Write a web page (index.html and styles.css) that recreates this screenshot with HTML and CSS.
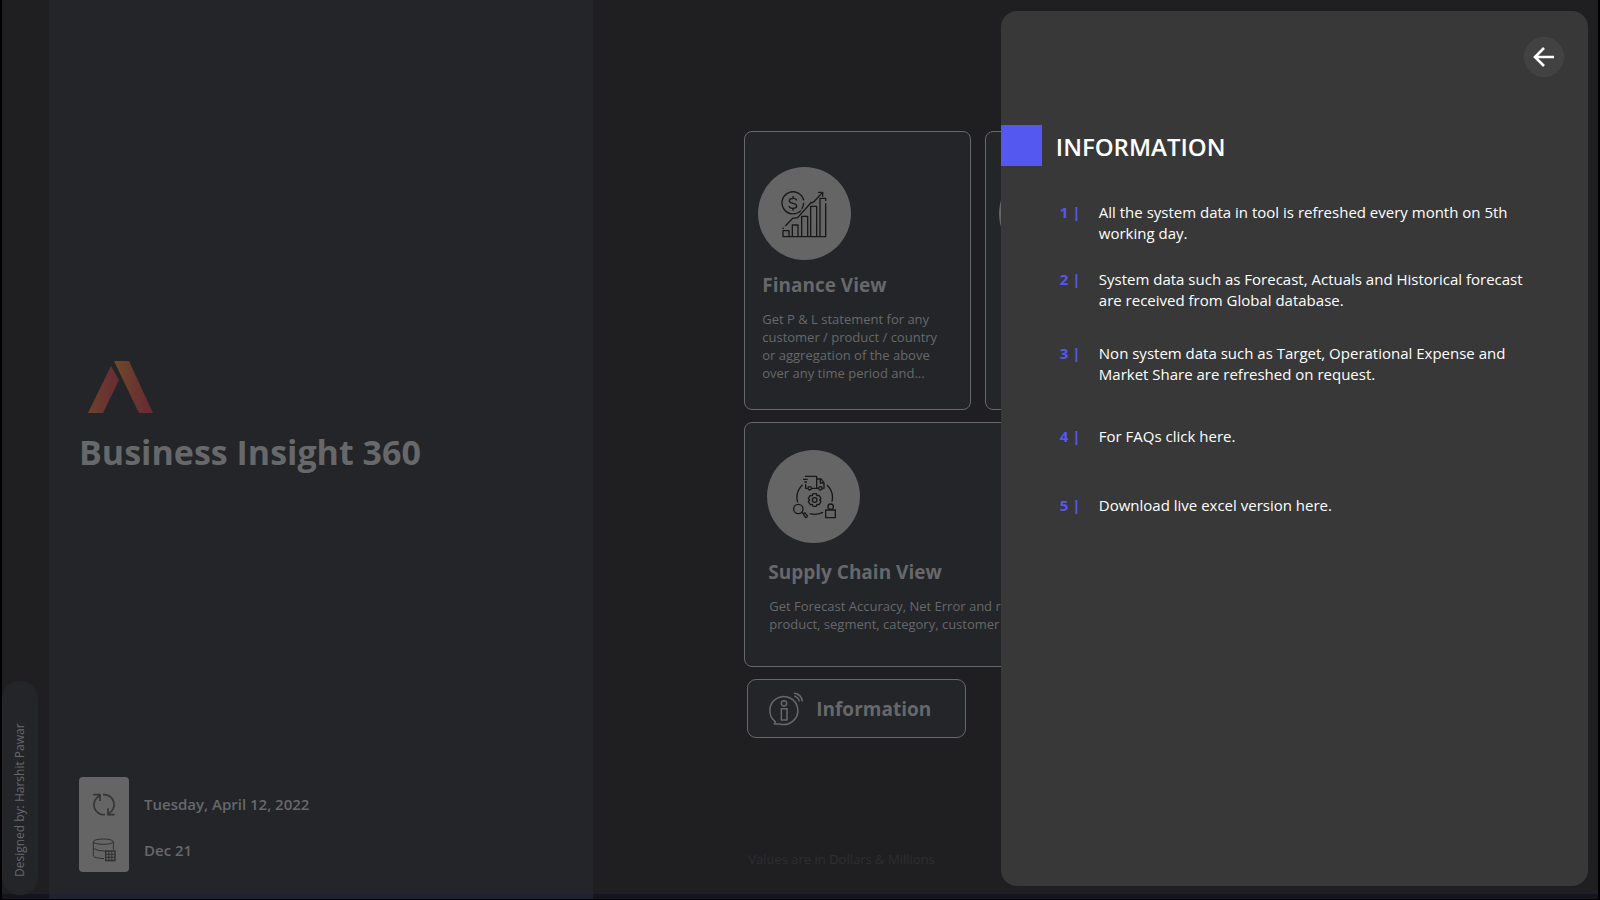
FILE: index.html
```html
<!DOCTYPE html>
<html lang="en">
<head>
<meta charset="utf-8">
<title>Business Insight 360</title>
<link rel="stylesheet" href="styles.css">
</head>
<body>
<div class="frame">
  <aside class="rail">
    <div class="credit"><span class="credit-text">Designed by: Harshit Pawar</span></div>
  </aside>

  <section class="intro">
    <svg class="logo" viewBox="0 0 66 53" aria-hidden="true">
      <defs>
        <linearGradient id="leg-left" x1="0" x2="1" y1="0" y2="0"><stop offset="0" stop-color="#6d422c"/><stop offset="1" stop-color="#672b33"/></linearGradient>
        <linearGradient id="leg-right" x1="0" x2="1" y1="0" y2="0"><stop offset="0" stop-color="#70482a"/><stop offset="1" stop-color="#652934"/></linearGradient>
      </defs>
      <path d="M0 52 L23 5 L31 19 L15 52 Z" fill="url(#leg-left)"/>
      <path d="M26 0 H41 L65 52 H51 Z" fill="url(#leg-right)"/>
    </svg>
    <h1 class="title">Business Insight 360</h1>
    <div class="meta">
      <div class="meta-icons">
        <svg class="meta-icon" viewBox="273 399 72 72" aria-hidden="true">
          <g fill="none" stroke="#353535" stroke-width="5">
            <path d="M306 404 A30 30 0 0 1 322 461 M341 464 H321 V445"/>
            <path d="M312 464 A30 30 0 0 1 296 407 M277 404 H297 V423"/>
          </g>
        </svg>
        <svg class="meta-icon" viewBox="274 532 72 72" aria-hidden="true">
          <g fill="none" stroke="#303030" stroke-width="3">
            <ellipse cx="308" cy="543" rx="30" ry="8"/>
            <path d="M278 543 V586 Q280 592 310 594 M338 543 V567 M278 563 Q290 572 313 571"/>
          </g>
          <path d="M313 569 H345 V602 H313 Z" fill="#303030"/>
          <path d="M317 573h6v6h-6z M326 573h6v6h-6z M335 573h6v6h-6z M317 582h6v6h-6z M326 582h6v6h-6z M335 582h6v6h-6z M317 591h6v6h-6z M326 591h6v6h-6z M335 591h6v6h-6z" fill="#656565"/>
        </svg>
      </div>
      <div class="meta-values">
        <span>Tuesday, April 12, 2022</span>
        <span>Dec 21</span>
      </div>
    </div>
  </section>

  <main class="canvas">
    <div class="cards">
      <article class="card">
        <div class="disc">
          <svg class="disc-icon" viewBox="137 207 144 144" aria-hidden="true">
            <g fill="none" stroke="#18181a" stroke-width="4" stroke-linejoin="round">
              <path d="M205 238 A33 33 0 1 0 197 268 M205 245 Q205 256 199 264"/>
              <path d="M184 238 Q183 232 173 232 Q162 232 162 239 Q162 245 173 247 Q184 249 184 256 Q184 262 173 262 Q162 262 161 255 M173 225 V232 M173 262 V269"/>
              <path d="M142 323 L145 320 M150 315 L172 292 L187 290 L226 246 L235 243 L261 215 M248 214 H262 V227"/>
              <path d="M141 347 H272 M143 347 V329 H161 V347 M171 347 V312 H188 V347 M199 347 V286 H217 V347 M226 347 V256 H244 V347 M254 347 V232 H271 V240 M271 247 V347"/>
            </g>
          </svg>
        </div>
        <h2 class="card-title">Finance View</h2>
        <p class="card-text">Get P &amp; L statement for any<br>customer / product / country<br>or aggregation of the above<br>over any time period and...</p>
      </article>
      <article class="card">
        <div class="disc"></div>
      </article>
      <article class="card card-wide">
        <div class="disc">
          <svg class="disc-icon" viewBox="163 188 144 144" aria-hidden="true">
            <g fill="none" stroke="#18181a" stroke-width="4" stroke-linejoin="round">
              <path d="M208 198 H243 V234 H228 M216 234 H210 V222 M202 207 H216 M206 215 H214 M243 206 H257 L265 218 V234 H260 M248 234 H243 M254 207 V218 H265"/>
              <circle cx="222" cy="234" r="5"/><circle cx="254" cy="234" r="5"/>
              <path d="M201 223 A53 53 0 0 0 186 276 M274 224 A53 53 0 0 1 289 274 M222 310 Q242 316 262 306"/>
              <path d="M232 250 h10 l2 6 l6 -1 l6 9 l-4 5 l4 5 l-6 9 l-6 -1 l-2 6 h-10 l-2 -6 l-6 1 l-6 -9 l4 -5 l-4 -5 l6 -9 l6 1 z"/>
              <circle cx="237" cy="269" r="7"/>
              <circle cx="188" cy="296" r="14"/>
              <path d="M198 306 L203 310 M203 311 L207 307 L215 316 Q215 321 210 322 Z"/>
              <path d="M270 299 H299 V322 H270 Z"/>
              <circle cx="285" cy="289" r="8"/>
            </g>
          </svg>
        </div>
        <h2 class="card-title">Supply Chain View</h2>
        <p class="card-text">Get Forecast Accuracy, Net Error and risk<br>product, segment, category, customer etc.</p>
      </article>
    </div>
    <button class="info-button" type="button">
      <svg class="info-icon" viewBox="100 452 108 108" aria-hidden="true">
        <g fill="none" stroke="#67686a" stroke-width="4.5" stroke-linejoin="round">
          <path d="M122 544 A42 42 0 1 1 136 551 L119 551 Z"/>
          <circle cx="148" cy="489" r="8"/>
          <path d="M140 505 H157 V539 H140 Z"/>
          <path d="M178 459 Q200 461 203 483 M179 468 Q191 471 194 483"/>
        </g>
      </svg>
      Information
    </button>
    <p class="note">Values are in Dollars &amp; Millions</p>
  </main>

  <aside class="drawer" aria-labelledby="drawer-title">
    <button class="back" type="button" aria-label="Back">
      <svg class="back-icon" viewBox="0 0 24 24" aria-hidden="true"><path d="M22 12 H3 M12 3 L3 12 L12 21" fill="none" stroke="#fff" stroke-width="2.6"/></svg>
    </button>
    <header class="drawer-head">
      <span class="marker"></span>
      <h2 class="drawer-title" id="drawer-title">INFORMATION</h2>
    </header>
    <ol class="points">
      <li class="point"><span class="num">1 |</span><span>All the system data in tool is refreshed every month on 5th<br>working day.</span></li>
      <li class="point"><span class="num">2 |</span><span>System data such as Forecast, Actuals and Historical forecast<br>are received from Global database.</span></li>
      <li class="point"><span class="num">3 |</span><span>Non system data such as Target, Operational Expense and<br>Market Share are refreshed on request.</span></li>
      <li class="point"><span class="num">4 |</span><a class="point-link" href="#faqs">For FAQs click here.</a></li>
      <li class="point"><span class="num">5 |</span><a class="point-link" href="#excel">Download live excel version here.</a></li>
    </ol>
  </aside>
</div>
</body>
</html>
```
FILE: styles.css
```css
* { box-sizing: border-box; }
body, h1, h2, p, ol { margin: 0; padding: 0; }
body {
  background: #000;
  color: #67686a;
  font-family: "Segoe UI", "Open Sans", "Noto Sans", sans-serif;
}
button { font-family: inherit; padding: 0; cursor: pointer; }

.frame {
  position: relative;
  display: flex;
  min-height: 100vh;
  padding: 0 2px 1px;
  overflow: hidden;
}

.rail {
  flex: 0 0 47px;
  display: flex;
  align-items: flex-end;
  background: #1f1f21;
  border-bottom: 5px solid #15151f;
}
.credit {
  display: flex;
  justify-content: center;
  width: 36px;
  height: 214px;
  margin-bottom: -1px;
  padding-bottom: 18px;
  border-radius: 18px;
  background: #232529;
}
.credit-text {
  writing-mode: vertical-rl;
  transform: rotate(180deg);
  font-size: 12px;
  line-height: 36px;
}

.intro {
  flex: 0 0 544px;
  flex-basis: 34.1%;
  display: flex;
  flex-direction: column;
  padding: 40vh 30px 22px;
  background: #232529;
  border-bottom: 5px solid #1f2231;
}
.logo { width: 66px; height: 53px; margin: 1px 0 0 9px; }
.title {
  margin-top: 14px;
  font-size: 34px;
  line-height: 48px;
  font-weight: 700;
  white-space: nowrap;
}
.meta { display: flex; gap: 15px; margin-top: auto; }
.meta-icons {
  display: flex;
  flex-direction: column;
  justify-content: space-between;
  align-items: center;
  width: 50px;
  height: 95px;
  padding: 16px 0 10px;
  border-radius: 4px;
  background: #656565;
}
.meta-icon { width: 24px; height: 24px; }
.meta-values {
  display: flex;
  flex-direction: column;
  justify-content: space-between;
  padding: 16px 0 11px;
  font-size: 15px;
  line-height: 22px;
  font-weight: 600;
}

.canvas {
  flex: 1;
  display: flex;
  flex-direction: column;
  align-items: flex-start;
  padding: 131px 0 24px 151px;
  background: #1f1f21;
  border-bottom: 5px solid #15151f;
}
.cards {
  display: grid;
  grid-template-columns: repeat(3, 227px);
  gap: 12px 14px;
}
.card {
  padding: 35px 14px 27px 13px;
  border: 1px solid #67686a;
  border-radius: 8px;
  background: #232529;
}
.card-wide { grid-column: 1 / -1; padding: 27px 14px 33px 22px; }
.disc {
  display: flex;
  align-items: center;
  justify-content: center;
  width: 93px;
  height: 93px;
  border-radius: 50%;
  background: #656565;
}
.disc-icon { width: 48px; height: 48px; }
.card-title {
  margin: 11px 0 11px 4px;
  font-size: 19px;
  line-height: 28px;
  font-weight: 700;
  white-space: nowrap;
}
.card-wide .card-title { margin: 15px 0 11px 1px; }
.card-text {
  margin-left: 4px;
  font-size: 13px;
  line-height: 18px;
  white-space: nowrap;
}
.card-wide .card-text { margin-left: 2px; }

.info-button {
  display: flex;
  align-items: center;
  gap: 12px;
  width: 219px;
  height: 59px;
  margin: 12px 0 0 3px;
  padding-left: 20px;
  border: 1px solid #67686a;
  border-radius: 9px;
  background: #232529;
  color: #67686a;
  font-size: 19px;
  font-weight: 700;
}
.info-icon { width: 36px; height: 36px; }
.note {
  margin: auto 0 0 4px;
  color: #2d2e30;
  font-size: 13px;
  line-height: 22px;
}

.drawer {
  position: absolute;
  top: 11px;
  right: 12px;
  bottom: 14px;
  width: 36.7%;
  border-radius: 16px;
  background: #383838;
  color: #fff;
}
.back {
  display: flex;
  align-items: center;
  justify-content: center;
  width: 40px;
  height: 40px;
  margin: 26px 24px 0 auto;
  border: 1px solid #464646;
  border-radius: 50%;
  background: #424242;
}
.back-icon { width: 24px; height: 24px; }
.drawer-head {
  display: flex;
  align-items: center;
  gap: 14px;
  margin-top: 48px;
}
.marker { width: 41px; height: 41px; background: #5558f0; }
.drawer-title { padding-top: 2px; font-size: 24px; line-height: 36px; font-weight: 600; }
.points {
  margin: 36px 40px 0 59px;
  list-style: none;
  font-size: 15px;
  line-height: 21px;
}
.point { display: flex; white-space: nowrap; }
.point + .point { margin-top: 25px; }
.point:nth-child(3) { margin-top: 32px; }
.point:nth-child(4) { margin-top: 41px; }
.point:nth-child(5) { margin-top: 48px; }
.num { flex: 0 0 39px; color: #5558f0; font-weight: 700; }
.point-link { color: inherit; text-decoration: none; }
```
